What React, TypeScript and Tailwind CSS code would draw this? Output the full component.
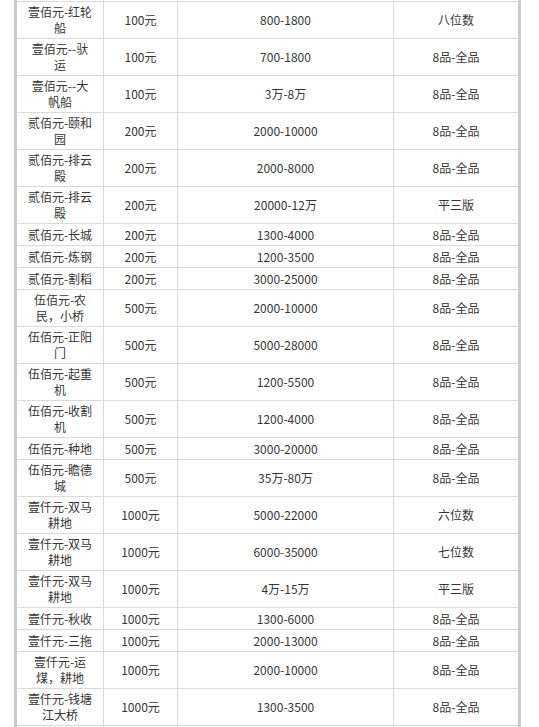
import React from "react";

type Row = { name: string[]; price: string; range: string; grade: string };

const rows: Row[] = [
  { name: ["壹佰元-红轮", "船"], price: "100元", range: "800-1800", grade: "八位数" },
  { name: ["壹佰元--驮", "运"], price: "100元", range: "700-1800", grade: "8品-全品" },
  { name: ["壹佰元--大", "帆船"], price: "100元", range: "3万-8万", grade: "8品-全品" },
  { name: ["贰佰元-颐和", "园"], price: "200元", range: "2000-10000", grade: "8品-全品" },
  { name: ["贰佰元-排云", "殿"], price: "200元", range: "2000-8000", grade: "8品-全品" },
  { name: ["贰佰元-排云", "殿"], price: "200元", range: "20000-12万", grade: "平三版" },
  { name: ["贰佰元-长城"], price: "200元", range: "1300-4000", grade: "8品-全品" },
  { name: ["贰佰元-炼钢"], price: "200元", range: "1200-3500", grade: "8品-全品" },
  { name: ["贰佰元-割稻"], price: "200元", range: "3000-25000", grade: "8品-全品" },
  { name: ["伍佰元-农", "民，小桥"], price: "500元", range: "2000-10000", grade: "8品-全品" },
  { name: ["伍佰元-正阳", "门"], price: "500元", range: "5000-28000", grade: "8品-全品" },
  { name: ["伍佰元-起重", "机"], price: "500元", range: "1200-5500", grade: "8品-全品" },
  { name: ["伍佰元-收割", "机"], price: "500元", range: "1200-4000", grade: "8品-全品" },
  { name: ["伍佰元-种地"], price: "500元", range: "3000-20000", grade: "8品-全品" },
  { name: ["伍佰元-瞻德", "城"], price: "500元", range: "35万-80万", grade: "8品-全品" },
  { name: ["壹仟元-双马", "耕地"], price: "1000元", range: "5000-22000", grade: "六位数" },
  { name: ["壹仟元-双马", "耕地"], price: "1000元", range: "6000-35000", grade: "七位数" },
  { name: ["壹仟元-双马", "耕地"], price: "1000元", range: "4万-15万", grade: "平三版" },
  { name: ["壹仟元-秋收"], price: "1000元", range: "1300-6000", grade: "8品-全品" },
  { name: ["壹仟元-三拖"], price: "1000元", range: "2000-13000", grade: "8品-全品" },
  { name: ["壹仟元-运", "煤，耕地"], price: "1000元", range: "2000-10000", grade: "8品-全品" },
  { name: ["壹仟元-钱塘", "江大桥"], price: "1000元", range: "1300-3500", grade: "8品-全品" },
];

export default function App() {
  return (
    <div
      className="w-[539px] h-[727px] overflow-hidden bg-white text-[12px] leading-[18px] text-[#363636]"
      style={{ fontFamily: '"Noto Sans CJK SC", "Microsoft YaHei", sans-serif' }}
    >
      <div className="ml-[14px] w-[507px] h-full flex flex-col border-l-[3px] border-r-[3px] border-[#cbcbcb]">
        <div className="h-px shrink-0 flex">
          <div className="w-[87px] border-r border-[#dadada]" />
          <div className="w-[74px] border-r border-[#dadada]" />
          <div className="w-[216px] border-r border-[#dadada]" />
          <div className="flex-1" />
        </div>
        <div className="border-t border-[#dadada] flex flex-col">
          {rows.map((r, i) => (
            <div
              key={i}
              className={`flex shrink-0 border-b border-[#dadada] ${r.name.length > 1 ? "h-[37px]" : "h-[22px]"}`}
            >
              <div className="w-[87px] border-r border-[#dadada] flex flex-col items-center justify-center whitespace-nowrap leading-[16px]">
                {r.name.map((l, j) => (
                  <span key={j}>{l}</span>
                ))}
              </div>
              <div className="w-[74px] border-r border-[#dadada] flex items-center justify-center whitespace-nowrap">
                {r.price}
              </div>
              <div className="w-[216px] border-r border-[#dadada] flex items-center justify-center whitespace-nowrap">
                {r.range}
              </div>
              <div className="flex-1 flex items-center justify-center whitespace-nowrap">{r.grade}</div>
            </div>
          ))}
          <div className="flex h-[20px] shrink-0">
            <div className="w-[87px] border-r border-[#dadada]" />
            <div className="w-[74px] border-r border-[#dadada]" />
            <div className="w-[216px] border-r border-[#dadada]" />
            <div className="flex-1" />
          </div>
        </div>
      </div>
    </div>
  );
}
